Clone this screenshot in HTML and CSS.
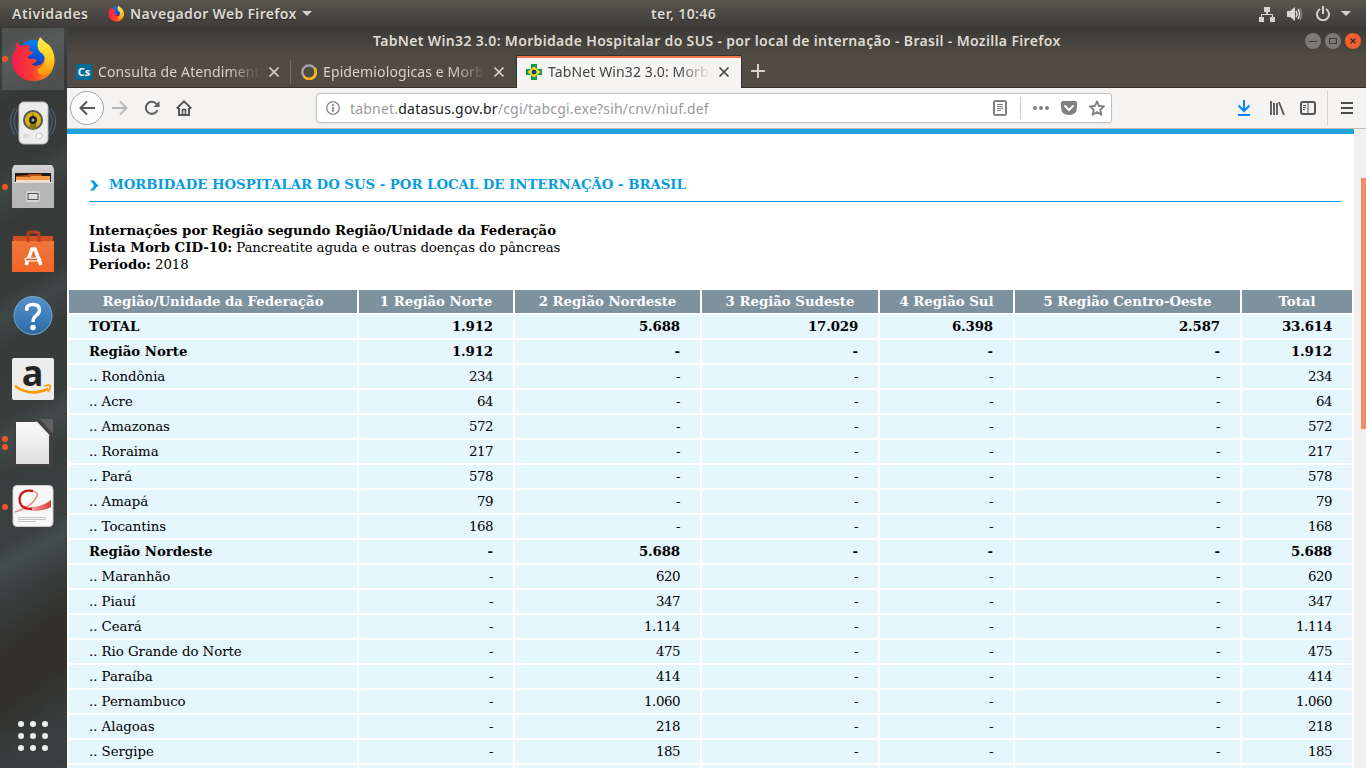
FILE: index.html
```html
<!DOCTYPE html>
<html lang="pt-BR">
<head>
<meta charset="utf-8">
<title>TabNet Win32 3.0: Morbidade Hospitalar do SUS - por local de internação - Brasil</title>
<link rel="stylesheet" href="styles.css">
</head>
<body>
<svg width="0" height="0" class="defs">
  <defs>
    <linearGradient id="fxRed" x1="0" y1="0" x2="1" y2=".3"><stop offset="0" stop-color="#f5194e"/><stop offset=".35" stop-color="#fb4a2c"/><stop offset=".7" stop-color="#ff9a10"/><stop offset="1" stop-color="#ffcb1c"/></linearGradient>
    <linearGradient id="fxYel" x1="0" y1="0" x2="0" y2="1"><stop offset="0" stop-color="#fff04a"/><stop offset=".5" stop-color="#ffd426"/><stop offset="1" stop-color="#ff9310"/></linearGradient>
    <linearGradient id="fxBlue" x1=".7" y1="0" x2=".3" y2="1"><stop offset="0" stop-color="#0a8cf5"/><stop offset=".5" stop-color="#0a50d8"/><stop offset="1" stop-color="#2a1a70"/></linearGradient>
    <linearGradient id="fxLow" x1="0" y1="0" x2="1" y2="0"><stop offset="0" stop-color="#f51a50"/><stop offset=".5" stop-color="#f9402e"/><stop offset="1" stop-color="#ffa80f"/></linearGradient>
    <symbol id="firefox" viewBox="0 0 44 46">
      <circle cx="22" cy="20" r="16" fill="url(#fxBlue)"/>
      <path d="M6 6Q8 9 10 10Q15 8 19 10Q17 13 19 15L22 16Q22 18 17 20Q16 22 19 23Q23 22 26 24Q25 27 20 28Q23 31 29 29Q35 26 33 16Q32 9 37 8Q45 18 43 29C41 39 33 45 23 45C10 45 1 36 1 24Q1 18 5 13Q4 10 6 6Z" fill="url(#fxLow)"/>
      <path d="M29 1Q33 6 38 9Q45 17 43 29Q40 38 32 39Q25 38 27 33Q34 30 34 23Q34 19 29 16Q24 10 29 1Z" fill="url(#fxYel)"/>
    </symbol>
    <symbol id="close" viewBox="0 0 12 12"><path d="M1.500 1.500L10.500 10.500M10.500 1.500L1.500 10.500" fill="none" stroke="currentColor" stroke-width="1.700"/></symbol>
    <linearGradient id="metal" x1="0" y1="0" x2="0" y2="1"><stop offset="0" stop-color="#d5d5d5"/><stop offset="1" stop-color="#999"/></linearGradient>
    <linearGradient id="bag" x1="0" y1="0" x2="0" y2="1"><stop offset="0" stop-color="#ef763c"/><stop offset="1" stop-color="#f16628"/></linearGradient>
    <linearGradient id="help" x1="0" y1="0" x2="0" y2="1"><stop offset="0" stop-color="#5593ce"/><stop offset="1" stop-color="#2c69a5"/></linearGradient>
    <linearGradient id="paper" x1="0" y1="0" x2="0" y2="1"><stop offset="0" stop-color="#fbfbfb"/><stop offset="1" stop-color="#dfdfdf"/></linearGradient>
    <linearGradient id="swoosh" x1="0" y1="0" x2="1" y2="0"><stop offset="0" stop-color="#f0a0a0"/><stop offset=".5" stop-color="#f09a9a"/><stop offset="1" stop-color="#d83a3a"/></linearGradient>
  </defs>
</svg>

<header class="panel">
  <span class="activities">Atividades</span>
  <svg class="app-icon" width="16" height="17"><use href="#firefox"/></svg>
  <span class="app-name">Navegador Web Firefox</span>
  <i class="caret"></i>
  <span class="clock">ter, 10:46</span>
  <svg class="net" width="16" height="16" viewBox="0 0 16 16"><path d="M5 1h6v5H9v2h5v3h2v5h-5v-5h2V9H3v2h2v5H0v-5h2V8h5V6H5z" fill="#d7d3cc"/></svg>
  <svg class="vol" width="16" height="14" viewBox="0 0 16 14"><path d="M0 4h3l5-4v14l-5-4H0z" fill="#dbd8d1"/><path d="M9 4q2 3 0 6M11 2q3 5 0 10" stroke="#dbd8d1" stroke-width="1.500" fill="none"/><path d="M13 1q3 6 0 12" stroke="#85827b" stroke-width="1.500" fill="none"/></svg>
  <svg class="power" width="14" height="15" viewBox="0 0 14 15"><path d="M4 3A6 6 0 1 0 10 3M7 0V8" stroke="#d7d3cc" stroke-width="2" fill="none"/></svg>
  <i class="caret"></i>
</header>

<div class="desktop">
<aside class="dock">
  <div class="slot active run"><svg width="44" height="46"><use href="#firefox"/></svg></div>
  <div class="slot"><svg width="48" height="44" viewBox="0 0 48 44"><g fill="none" stroke="#50718e" stroke-width="1.300" opacity=".7"><path d="M6 7Q-3 20 6 34M9 8Q1 20 9 33M42 7Q51 20 42 34M39 8Q47 20 39 33"/></g><rect x="10" y="1" width="29" height="42" rx="5" fill="#ececec" stroke="#bdbdbd"/><circle cx="24" cy="19" r="10" fill="#555"/><circle cx="24" cy="19" r="8" fill="#d5b51c"/><path d="M24 11L20 27Q24 29 28 27Z" fill="#8b7714"/><circle cx="24" cy="19" r="4" fill="#242424"/><circle cx="24" cy="19" r="1.500" fill="#aaa"/><circle cx="30" cy="35" r="3" fill="#fff" stroke="#c7c7c7"/><circle cx="17" cy="35" r="2" fill="#e2e2e2" stroke="#d0d0d0"/></svg></div>
  <div class="slot run"><svg width="42" height="44" viewBox="0 0 42 44"><path d="M2 0H40L42 4V43H0V4Z" fill="url(#metal)"/><path d="M3 8H39V18H3Z" fill="#1c1c1c"/><path d="M4 11L16 10L17 9H29L30 11H36V18H4Z" fill="#bc4e10"/><path d="M4 12H18L19 11H38V18H4Z" fill="#f29a48"/><path d="M4 15H38V18H4Z" fill="#f6dfc2"/><path d="M2 17H40V24H42V43H0V24H2Z" fill="#b6b6b6"/><path d="M2 17.500H40" stroke="#ddd"/><rect x="14" y="26" width="14" height="11" rx="2" fill="#d5d5d5"/><rect x="16" y="28.500" width="10" height="6" fill="#ddd" stroke="#555"/></svg></div>
  <div class="slot"><svg width="42" height="44" viewBox="0 0 42 44"><path d="M1 7H41V16H1Z" fill="#cf511f"/><path d="M0 12H42V43H0Z" fill="url(#bag)"/><path d="M16 13V5Q16 3 19 3H24Q27 3 27 5V13" fill="none" stroke="#bc3e19" stroke-width="3"/><path d="M14 36L20 20H23L29 36" stroke="#fff" stroke-width="3.500" fill="none"/><rect x="12.500" y="28.500" width="17" height="4" rx="2" fill="#fff"/><path d="M14 30.500H25" stroke="#e85a20" stroke-width="1.700"/></svg></div>
  <div class="slot"><svg class="help" width="40" height="42" viewBox="0 0 40 42"><circle cx="20" cy="20.500" r="19" fill="url(#help)" stroke="#79a8d4"/><path d="M13.500 15Q13 9.500 20 9.500Q26.500 9.500 26.500 15Q26.500 18.500 23 20.500Q20 23 20 27" fill="none" stroke="#fff" stroke-width="3.300"/><circle cx="13.800" cy="14" r="2" fill="#fff"/><circle cx="20" cy="32.500" r="2.700" fill="#fff"/></svg></div>
  <div class="slot"><svg width="42" height="42" viewBox="0 0 42 42"><rect width="42" height="42" rx="2" fill="#ededed"/><text x="20.500" y="28" class="amazon-a" text-anchor="middle">a</text><path d="M3 28Q18 39 36 31" fill="none" stroke="#f90" stroke-width="2.500"/><path d="M32 28Q38 26 38.500 28Q38.500 31 36 34" fill="none" stroke="#f90" stroke-width="1.700"/></svg></div>
  <div class="slot run twice"><svg width="40" height="48" viewBox="0 0 40 48"><rect width="40" height="48" rx="2" fill="#414141"/><path d="M27 0H40V15Z" fill="#606060"/><path d="M3 3H23L36 17V45H3Z" fill="url(#paper)"/><path d="M23 3L36 17" stroke="#eee" stroke-width="2"/></svg></div>
  <div class="slot run"><svg class="pdf" width="42" height="42" viewBox="0 0 42 42"><rect x="1" y=".5" width="40" height="41" rx="4" fill="#f7f7f7" stroke="#ccc"/><path d="M3 27Q12 25 19 22Q30 22 39 15V22Q28 28 17 25Q9 25 3 27Z" fill="url(#swoosh)"/><path d="M3 27Q21 21 25 11Q26 6 20 6" fill="none" stroke="#e89090" stroke-width="1.700"/><path d="M21 6Q9 4 7.500 14Q7.500 24 20 24" fill="none" stroke="#cc1515" stroke-width="2.300"/><path d="M6 32.500H34M6 34.500H34M6 36.500H24" stroke="#c4c4c4"/></svg></div>
  <div class="apps"><i></i><i></i><i></i><i></i><i></i><i></i><i></i><i></i><i></i></div>
</aside>

<main class="window">
  <div class="titlebar">
    <h1>TabNet Win32 3.0: Morbidade Hospitalar do SUS - por local de internação - Brasil - Mozilla Firefox</h1>
    <div class="controls">
      <svg width="16" height="16" viewBox="0 0 16 16"><circle cx="8" cy="8" r="8" fill="#7d7a73"/><path d="M4 8.500H12" stroke="#3c3a36"/></svg>
      <svg width="16" height="16" viewBox="0 0 16 16"><circle cx="8" cy="8" r="8" fill="#7d7a73"/><rect x="4.500" y="5.500" width="7" height="5" fill="none" stroke="#3c3a36"/></svg>
      <svg width="16" height="16" viewBox="0 0 16 16"><circle cx="8" cy="8" r="8" fill="#ef6034"/><path d="M5.500 5.500L10.500 10.500M10.500 5.500L5.500 10.500" stroke="#47231a" stroke-width="1.300"/></svg>
    </div>
  </div>

  <div class="tabs">
    <div class="tab"><span class="cs">Cs</span><span class="label">Consulta de Atendimento</span><svg width="12" height="12"><use href="#close"/></svg></div>
    <div class="tab second"><svg class="ring" width="16" height="16" viewBox="0 0 16 16"><circle cx="8" cy="8" r="6.700" fill="none" stroke="#a8a8ab" stroke-width="2.300"/><path d="M13.500 4A6.700 6.700 0 1 1 3 12.500" fill="none" stroke="#fcb80e" stroke-width="2.500"/></svg><span class="label">Epidemiologicas e Morbi</span><svg width="12" height="12"><use href="#close"/></svg></div>
    <div class="tab current"><svg width="16" height="16" viewBox="0 0 16 16"><path d="M5 0H11V5H16V11H11V16H5V11H0V5H5Z" fill="#15964a"/><path d="M8 2.500L14.500 8L8 13.500L1.500 8Z" fill="#f6e51c"/><circle cx="8" cy="8" r="2.500" fill="#253b8a"/></svg><span class="label">TabNet Win32 3.0: Morbi</span><svg width="12" height="12"><use href="#close"/></svg></div>
    <svg class="plus" width="14" height="14" viewBox="0 0 14 14"><path d="M7 0V14M0 7H14" stroke="#d5d1c9" stroke-width="2"/></svg>
  </div>

  <nav class="toolbar">
    <span class="back"><svg width="16" height="16" viewBox="0 0 16 16"><path d="M16 8H1.500M8 1.500L1.500 8L8 14.500" fill="none" stroke="#555" stroke-width="2"/></svg></span>
    <svg class="forward" width="16" height="16" viewBox="0 0 16 16"><path d="M0 8H14.500M8 1.500L14.500 8L8 14.500" fill="none" stroke="#bababa" stroke-width="2"/></svg>
    <svg class="reload" width="16" height="16" viewBox="0 0 16 16"><path d="M12.500 4A6 6 0 1 0 13.500 10" fill="none" stroke="#5c5c5c" stroke-width="2"/><path d="M15.500 1V7H9.500Z" fill="#5c5c5c"/></svg>
    <svg class="home" width="16" height="16" viewBox="0 0 16 16"><path d="M.7 8.500L8 1.300L15.300 8.500" fill="none" stroke="#555" stroke-width="1.900"/><path d="M3 8V15H13V8" fill="none" stroke="#555" stroke-width="2"/><path d="M6.500 15V9.500H9.500V15" fill="none" stroke="#555" stroke-width="1.600"/></svg>
    <div class="urlbar">
      <svg class="info" width="14" height="14" viewBox="0 0 14 14"><circle cx="7" cy="7" r="6.300" fill="none" stroke="#868686" stroke-width="1.300"/><path d="M7 6V11M7 3V5" stroke="#868686" stroke-width="1.700"/></svg>
      <span class="url">tabnet.<b>datasus.gov.br</b>/cgi/tabcgi.exe?sih/cnv/niuf.def</span>
      <svg class="reader" width="14" height="16" viewBox="0 0 14 16"><rect x="1" y="1" width="12" height="14" rx="1.500" fill="none" stroke="#808080" stroke-width="2"/><path d="M4 4.500H10M4 6.500H10M4 8.500H10M4 10.500H8" stroke="#808080"/></svg>
      <i class="divider"></i>
      <svg class="dots" width="16" height="4" viewBox="0 0 16 4"><g fill="#808080"><circle cx="2" cy="2" r="2"/><circle cx="8" cy="2" r="2"/><circle cx="14" cy="2" r="2"/></g></svg>
      <svg class="pocket" width="16" height="14" viewBox="0 0 16 14"><path d="M1.500 0H14.500Q16 0 16 1.500V6Q16 14 8 14Q0 14 0 6V1.500Q0 0 1.500 0Z" fill="#808080"/><path d="M4 5L8 9L12 5" stroke="#fff" stroke-width="2" stroke-linecap="round" fill="none"/></svg>
      <svg width="16" height="16" viewBox="0 0 16 16"><path d="M8 1.300L10 6L15 6.400L11.200 9.700L12.400 14.800L8 12L3.600 14.800L4.800 9.700L1 6.400L6 6Z" fill="none" stroke="#808080" stroke-width="1.900" stroke-linejoin="round"/></svg>
    </div>
    <svg class="download" width="14" height="16" viewBox="0 0 14 16"><path d="M7 0V10M1.500 5.500L7 11L12.500 5.500M1 15H13" fill="none" stroke="#0a84ff" stroke-width="2"/></svg>
    <svg class="library" width="16" height="14" viewBox="0 0 16 14"><path d="M2 0V14M5 2V14M8 2V14" stroke="#555" stroke-width="1.800"/><path d="M10 1L15 14" stroke="#555" stroke-width="1.800"/></svg>
    <svg class="sidebar" width="16" height="14" viewBox="0 0 16 14"><rect x="1" y="1" width="14" height="12" rx="2" fill="none" stroke="#555" stroke-width="2"/><path d="M8 1V13M3 4.500H6M3 6.500H6M3 8.500H5" stroke="#555"/></svg>
    <i class="bar"></i>
    <svg width="12" height="12" viewBox="0 0 12 12"><path d="M0 1H12M0 6H12M0 11H12" stroke="#4c4c4c" stroke-width="2"/></svg>
  </nav>

  <div class="viewport">
    <article class="page">
      <h2><svg width="10" height="11" viewBox="0 0 10 11"><path d="M1 .5H4.500C6 1 7 4 9.800 5.500C7 7 6 10 4.500 10.500H.5C3 9 4.500 7 4.800 5.500C4.500 3.500 2.500 2 1 .5Z" fill="#069de0"/></svg><span>MORBIDADE HOSPITALAR DO SUS - POR LOCAL DE INTERNAÇÃO - BRASIL</span></h2>
      <p class="summary"><b>Internações por Região segundo Região/Unidade da Federação</b><br><b>Lista Morb CID-10:</b> Pancreatite aguda e outras doenças do pâncreas<br><b>Período:</b> 2018</p>
      <table>
        <colgroup><col class="c1"><col class="c2"><col class="c3"><col class="c4"><col class="c5"><col class="c6"><col class="c7"></colgroup>
        <thead><tr><th>Região/Unidade da Federação</th><th>1 Região Norte</th><th>2 Região Nordeste</th><th>3 Região Sudeste</th><th>4 Região Sul</th><th>5 Região Centro-Oeste</th><th>Total</th></tr></thead>
        <tbody>
        <tr class="sum"><td>TOTAL</td><td>1.912</td><td>5.688</td><td>17.029</td><td>6.398</td><td>2.587</td><td>33.614</td></tr>
        <tr class="sum"><td>Região Norte</td><td>1.912</td><td>-</td><td>-</td><td>-</td><td>-</td><td>1.912</td></tr>
        <tr><td>.. Rondônia</td><td>234</td><td>-</td><td>-</td><td>-</td><td>-</td><td>234</td></tr>
        <tr><td>.. Acre</td><td>64</td><td>-</td><td>-</td><td>-</td><td>-</td><td>64</td></tr>
        <tr><td>.. Amazonas</td><td>572</td><td>-</td><td>-</td><td>-</td><td>-</td><td>572</td></tr>
        <tr><td>.. Roraima</td><td>217</td><td>-</td><td>-</td><td>-</td><td>-</td><td>217</td></tr>
        <tr><td>.. Pará</td><td>578</td><td>-</td><td>-</td><td>-</td><td>-</td><td>578</td></tr>
        <tr><td>.. Amapá</td><td>79</td><td>-</td><td>-</td><td>-</td><td>-</td><td>79</td></tr>
        <tr><td>.. Tocantins</td><td>168</td><td>-</td><td>-</td><td>-</td><td>-</td><td>168</td></tr>
        <tr class="sum"><td>Região Nordeste</td><td>-</td><td>5.688</td><td>-</td><td>-</td><td>-</td><td>5.688</td></tr>
        <tr><td>.. Maranhão</td><td>-</td><td>620</td><td>-</td><td>-</td><td>-</td><td>620</td></tr>
        <tr><td>.. Piauí</td><td>-</td><td>347</td><td>-</td><td>-</td><td>-</td><td>347</td></tr>
        <tr><td>.. Ceará</td><td>-</td><td>1.114</td><td>-</td><td>-</td><td>-</td><td>1.114</td></tr>
        <tr><td>.. Rio Grande do Norte</td><td>-</td><td>475</td><td>-</td><td>-</td><td>-</td><td>475</td></tr>
        <tr><td>.. Paraíba</td><td>-</td><td>414</td><td>-</td><td>-</td><td>-</td><td>414</td></tr>
        <tr><td>.. Pernambuco</td><td>-</td><td>1.060</td><td>-</td><td>-</td><td>-</td><td>1.060</td></tr>
        <tr><td>.. Alagoas</td><td>-</td><td>218</td><td>-</td><td>-</td><td>-</td><td>218</td></tr>
        <tr><td>.. Sergipe</td><td>-</td><td>185</td><td>-</td><td>-</td><td>-</td><td>185</td></tr>
        <tr><td></td><td></td><td></td><td></td><td></td><td></td><td></td></tr>
        </tbody>
      </table>
    </article>
    <div class="scrollbar"><i></i></div>
  </div>
</main>
</div>
</body>
</html>
```
FILE: styles.css
```css
* { box-sizing: border-box; }
body { margin: 0; width: 1366px; height: 768px; overflow: hidden; font-family: "Noto Sans", "Open Sans", sans-serif; font-size: 14px; }
svg { flex: none; display: block; }
.defs { position: absolute; }
.panel { height: 27px; display: flex; align-items: center; padding: 0 15px 0 12px; background: linear-gradient(#5a564e, #3d3c38); color: #dfdbd2; font-weight: 600; white-space: nowrap; text-shadow: 0 1px 1px #2a2926; }
.activities { width: 96px; letter-spacing: .5px; }
.app-icon { margin-right: 6px; }
.app-name { width: 172px; letter-spacing: .33px; }
.caret { width: 0; height: 0; border: 5px solid transparent; border-top-color: #d7d3cc; border-bottom: 0; }
.clock { width: 68px; margin-left: 339px; margin-right: auto; letter-spacing: .4px; }
.vol { margin-left: 12px; }
.power { margin: 0 11px 0 13px; }

.desktop { display: flex; height: 741px; }
.dock { width: 67px; flex: none; display: flex; flex-direction: column; padding: 0 1px 17px 0; background: linear-gradient(145deg, transparent 0 30%, #32312d 46% 66%, transparent 82%) 0 490px / 67px 251px no-repeat, repeating-linear-gradient(152deg, #2c2c2a44 0 18px, #4f5f6033 38px, #2c2c2a55 68px, #2c2c2a44 110px), linear-gradient(#3a3d3b, #3b4140 35%, #404849 70%, #3c4646); }
.slot { height: 64px; display: flex; align-items: center; justify-content: center; position: relative; }
.slot.active { background: linear-gradient(#ffffff20, #ffffff20) 2px 1px / 62px 62px no-repeat; }
.slot.run::before { content: ""; position: absolute; left: 2px; top: 29px; width: 6px; height: 6px; border-radius: 50%; background: #ee5622; }
.slot.twice::before { top: 25px; box-shadow: 0 8px #ee5622; }
.help { margin-top: 2px; }
.pdf { margin-bottom: 2px; }
.amazon-a { font: bold 36px "Noto Sans", sans-serif; line-height: 1; fill: #252525; }
.apps { margin-top: auto; align-self: center; display: grid; grid-template-columns: repeat(3, 6px); gap: 6px; }
.apps i { height: 6px; border-radius: 50%; background: #f0f0ed; }

.window { width: 1299px; display: flex; flex-direction: column; }
.titlebar { height: 28px; flex: none; display: flex; align-items: center; padding: 0 5px 0 306px; background: linear-gradient(#3a3935, #4f4b43); }
.titlebar h1 { margin: 0 0 2px; font-size: 14px; font-weight: 600; letter-spacing: .34px; color: #dfdbd2; white-space: nowrap; }
.controls { display: flex; gap: 4px; margin-left: auto; }
.tabs { height: 33px; flex: none; display: flex; background: #504c44; border-bottom: 1px solid #33312d; color: #d7d3cb; }
.tab { width: 225px; height: 33px; display: flex; align-items: center; padding: 1px 11px 0 9px; border-right: 1px solid transparent; background: linear-gradient(#77736b, #77736b) 100% 5px / 1px 24px no-repeat; }
.tab.second { width: 224px; background: none; padding-right: 10px; }
.tab.current { width: 226px; border: 1px solid #33312d; border-width: 1px 1px 0; background: linear-gradient(#f0784a, #f0784a) 0 0 / 100% 2px no-repeat #f5f4f2; color: #444; padding: 0 11px 0 9px; }
.label { flex: 1; overflow: hidden; white-space: nowrap; margin: 0 7px 2px 6px; letter-spacing: .12px; -webkit-mask-image: linear-gradient(90deg, #000 80%, transparent); mask-image: linear-gradient(90deg, #000 80%, transparent); }
.cs { width: 16px; height: 16px; background: #076b98; color: #fff; font: bold 11px/16px "Open Sans", sans-serif; text-align: center; }
.plus { margin: 9px 0 0 9px; }
.toolbar { height: 41px; flex: none; display: flex; align-items: center; padding: 0 13px 0 3px; background: #f4f3f1; border-bottom: 1px solid #bfbebc; }
.back { width: 34px; height: 34px; flex: none; border: 1px solid #a5a4a2; border-radius: 50%; background: #fbfbfb; display: flex; align-items: center; justify-content: center; }
.forward { margin-left: 8px; }
.reload { margin-left: 16px; }
.home { margin-left: 16px; }
.urlbar { width: 796px; flex: none; height: 30px; margin-left: 124px; display: flex; align-items: center; padding: 0 6px 0 9px; background: #fff; border: 1px solid #c2c1bf; border-radius: 3px; box-shadow: 0 1px 2px #0000000c; }
.url { margin-left: 10px; color: #9a9a9a; white-space: nowrap; letter-spacing: .2px; }
.url b { font-weight: 400; color: #222; }
.reader { margin-left: auto; }
.divider { width: 1px; height: 22px; background: #c7c7c7; margin: 0 12px 0 13px; }
.pocket { margin: 0 12px; }
.download { margin-left: 125px; }
.library { margin-left: 18px; }
.sidebar { margin-left: 15px; }
.bar { width: 1px; height: 34px; background: #d2d1cf; margin: 0 13px 0 11px; }

.viewport { flex: 1; min-height: 0; display: flex; overflow: hidden; }
.page { width: 1287px; height: 639px; overflow: hidden; border-top: 5px solid #1ea3df; background: #fff; font-family: "DejaVu Serif", serif; font-size: 13.333px; color: #000; }
.page h2 { height: 68px; margin: 0 13px 0 22px; padding-bottom: 9px; display: flex; align-items: flex-end; border-bottom: 1px solid #069de0; color: #069de0; font-size: 13.333px; line-height: 15px; letter-spacing: -.03px; }
.page h2 svg { margin: 0 10px 1px 0; }
.summary { margin: 20px 0 15px 22px; line-height: 17px; letter-spacing: -.1px; }
.summary b { letter-spacing: -.035px; }
table { width: 1287px; table-layout: fixed; border-collapse: separate; border-spacing: 2px; line-height: 15px; }
th { height: 23px; padding: 4px 0; background: #7e919f; color: #fff; white-space: nowrap; letter-spacing: -.03px; }
td { height: 23px; padding: 4px 20px; background: #e5f6fd; text-align: right; white-space: nowrap; letter-spacing: -.45px; }
td:first-child { text-align: left; letter-spacing: -.04px; }
.sum td { font-weight: bold; letter-spacing: -.15px; }
.sum td:first-child { letter-spacing: -.04px; }
.c1 { width: 288px; } .c2 { width: 154px; } .c3 { width: 185px; } .c4 { width: 176px; } .c5 { width: 133px; } .c6 { width: 225px; } .c7 { width: 110px; }
.scrollbar { width: 12px; background: #f1f0ee; padding: 49px 0 0 7px; }
.scrollbar i { display: block; height: 251px; background: #f28d67; }
```
